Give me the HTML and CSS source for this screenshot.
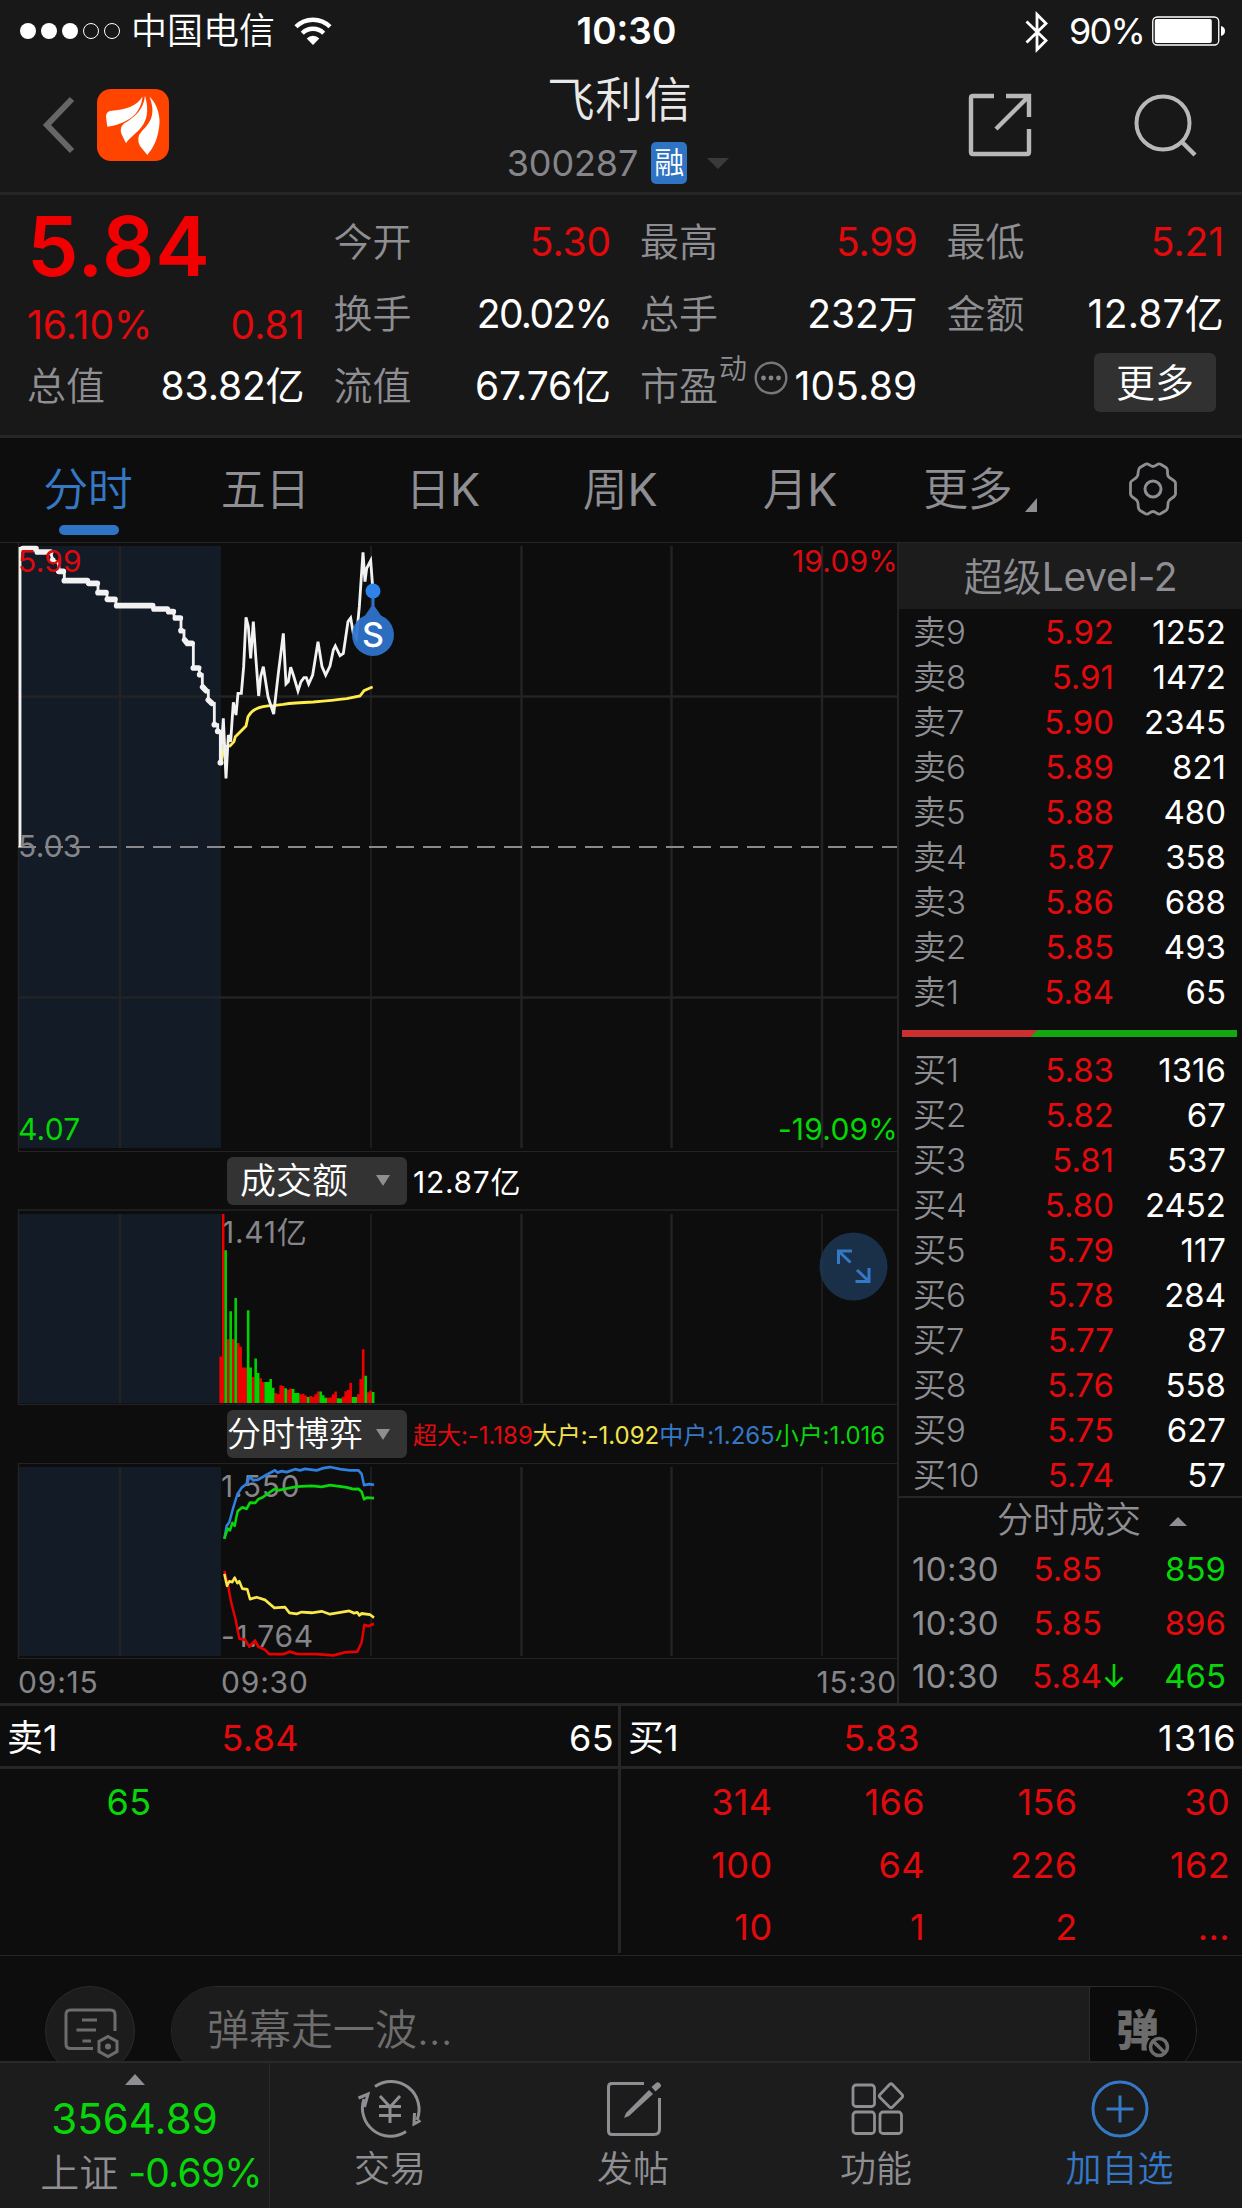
FILE: index.html
```html
<!DOCTYPE html>
<html lang="zh-CN">
<head>
<meta charset="utf-8">
<title>飞利信 300287</title>
<link rel="stylesheet" href="styles.css">
</head>
<body>
<div class="app">

  <header class="top">
    <div class="status">
      <div class="status-left">
        <svg class="signal" width="102" height="18" viewBox="0 0 102 18">
          <g fill="#fff"><circle cx="9" cy="9" r="8"/><circle cx="30" cy="9" r="8"/><circle cx="51" cy="9" r="8"/></g>
          <g fill="none" stroke="#fff" stroke-width="1"><circle cx="72" cy="9" r="7.5"/><circle cx="93" cy="9" r="7.5"/></g>
        </svg>
        <span class="carrier">中国电信</span>
        <svg class="wifi" width="38" height="28" viewBox="0 0 38 28">
          <g fill="none" stroke="#fff" stroke-width="4.4"><path d="M2 9.8A24 24 0 0 1 36 9.8"/><path d="M8.3 16.2A15.2 15.2 0 0 1 29.7 16.2"/></g>
          <path fill="#fff" d="M19 28L12.7 21.4A9 9 0 0 1 25.3 21.4Z"/>
        </svg>
      </div>
      <div class="clock">10:30</div>
      <div class="status-right">
        <svg class="bt" width="24" height="42" viewBox="0 0 24 42"><path d="M1.5 10.5L21 29.5L12 38.5V3.5L21 12.5L1.5 31.5" fill="none" stroke="#fff" stroke-width="2.8"/></svg>
        <span class="batt-text">90%</span>
        <svg width="74" height="30" viewBox="0 0 74 30"><rect x=".75" y="1" width="66" height="28" rx="4.5" fill="none" stroke="#fff" stroke-width="1.3"/><rect x="2.8" y="3" width="57" height="24" rx="2" fill="#fff"/><path d="M69 10Q73 11 73 15T69 20Z" fill="#fff"/></svg>
      </div>
    </div>
    <div class="nav">
      <div class="nav-left">
        <svg class="back" width="34" height="60" viewBox="0 0 34 60"><path d="M30 4L5 30L30 56" fill="none" stroke="#666" stroke-width="6"/></svg>
        <svg class="logo" width="72" height="72" viewBox="0 0 72 72"><rect width="72" height="72" rx="14" fill="#ff4400"/><g fill="#fff"><path d="M45.5 7.5C40 17 30 20.5 13 22Q9 23 9 28L10.3 37.8C28 35 44 27 45.5 7.5Z"/><path d="M48 6.7C46.5 22 36 29 27 34.5Q22 39 24.5 45L29 54.3C36 43 57 38 48 6.7Z"/><path d="M52.5 7.5C61 16 64 29 62 39C60 52 56 59 50.3 66L43 57Q38.5 49 45 42C54 33 59 25 52.5 7.5Z"/></g></svg>
      </div>
      <div class="nav-title">
        <h1>飞利信</h1>
        <div class="code"><span>300287</span><b>融</b><i class="caret"></i></div>
      </div>
      <div class="nav-right">
        <svg width="64" height="64" viewBox="0 0 64 64"><path d="M26 3H5Q3 3 3 5V59Q3 61 5 61H59Q61 61 61 59V36M38 3H61V24M60 4L28 36" fill="none" stroke="#b8b8b8" stroke-width="4.4"/></svg>
        <svg width="64" height="64" viewBox="0 0 64 64"><circle cx="30" cy="30" r="26.5" fill="none" stroke="#b8b8b8" stroke-width="4"/><path d="M48 48L62 62" stroke="#b8b8b8" stroke-width="4.4"/></svg>
      </div>
    </div>
  </header>

  <section class="quote">
    <div class="col first">
      <div class="price">5.84</div>
      <div class="pair chg"><span class="red">16.10%</span><span class="red">0.81</span></div>
      <div class="pair"><label>总值</label><span>83.82亿</span></div>
    </div>
    <div class="col">
      <div class="pair"><label>今开</label><span class="red">5.30</span></div>
      <div class="pair"><label>换手</label><span class="tight">20.02%</span></div>
      <div class="pair"><label>流值</label><span>67.76亿</span></div>
    </div>
    <div class="col">
      <div class="pair"><label>最高</label><span class="red">5.99</span></div>
      <div class="pair"><label>总手</label><span>232万</span></div>
      <div class="pair"><label class="pe">市盈<sup>动</sup><svg width="34" height="34" viewBox="0 0 34 34"><circle cx="17" cy="17" r="15.3" fill="none" stroke="#77777b" stroke-width="2.4"/><g fill="#85858a"><circle cx="9.5" cy="17" r="2.4"/><circle cx="17" cy="17" r="2.4"/><circle cx="24.5" cy="17" r="2.4"/></g></svg></label><span class="loose">105.89</span></div>
    </div>
    <div class="col">
      <div class="pair"><label>最低</label><span class="red">5.21</span></div>
      <div class="pair"><label>金额</label><span class="loose">12.87亿</span></div>
      <div class="pair end"><button class="more">更多</button></div>
    </div>
  </section>

  <nav class="tabs">
    <div class="tab on"><span>分时</span></div>
    <div class="tab"><span>五日</span></div>
    <div class="tab"><span>日<b>K</b></span></div>
    <div class="tab"><span>周<b>K</b></span></div>
    <div class="tab month"><span>月<b>K</b></span></div>
    <div class="tab menu"><span>更多</span><svg class="corner" width="12" height="14" viewBox="0 0 12 14"><path d="M12 0V14H0Z" fill="#8e8e93"/></svg></div>
    <div class="tab"><svg width="50" height="56" viewBox="0 0 50 56"><path d="M17 3.5C20 1 21.5 5.5 25 5.5S30 1 33 3.5L38 6.5C41 8.5 38.5 12 40 15S47.5 19 47.5 22V33C47.5 36.5 42 37 40.5 40.5S41 47.5 38 49.5L33 52.5C30 55 28.5 50.5 25 50.5S20 55 17 52.5L12 49.5C9 47.5 11 44 9.5 40.5S2.5 36.5 2.5 33V22C2.5 19 8 18.5 9.5 15S9 8.5 12 6.5Z" fill="none" stroke="#8e8e93" stroke-width="2.8"/><circle cx="25" cy="28" r="8" fill="none" stroke="#8e8e93" stroke-width="3"/></svg></div>
  </nav>

  <main class="board">
    <div class="charts">
      <svg class="chart" width="897" height="609" viewBox="0 543 897 609">
        <rect x="19" y="546" width="202" height="602" fill="#121b26"/>
        <g stroke="#232325"><path d="M18.5 543V1152M371 546V1148" stroke-width="1.5"/><path d="M120 546V1148M521.5 546V1148M671.5 546V1148M822 546V1148M19 696.5H897M19 997.5H897" stroke-width="2.5"/><path d="M18 1151.5H897" stroke-width="1"/></g>
        <path d="M18 847H897" stroke="#8a8a8e" stroke-width="2" stroke-dasharray="18 9"/>
        <g transform="translate(0 530) scale(.33333)" fill="none" stroke-linejoin="miter">
          <path stroke="#ffee4a" stroke-width="8.5" d="M664 695L672 650L690 648L702 635L706 620L738 588L744 560Q752 545 768 537Q785 528 820 527L850 523Q880 518 940 516Q1000 511 1040 506L1080 498L1092 482L1110 474L1118 471"/>
          <path stroke="#f2f2f2" stroke-width="8.5" d="M60 951V55H108L115 66H152L158 90L175 98L178 124H193V152H262L266 160H294V188H320L322 208H347L349 227H458L460 237H502L506 245L520 246L524 264H543V302H552V330L562 340H580V414H598V434H607V471L618 482H625V510L632 520H643V584H653V604H661V698L670 565L678 745L685 615L692 635L700 517L708 555L714 490H724L731 410L738 262L745 290L752 385L760 275L768 390L776 498L782 440L790 410L804 500L821 552L835 430L850 310L858 462L865 455L872 412L880 435L894 483L903 455L912 443H919L926 462L938 435L954 335L966 410L977 435L990 408L1000 360L1006 348L1020 377L1030 370L1044 275L1052 264L1060 310L1069 325L1078 230L1089 67L1095 155L1100 115L1112 92L1118 170"/>
          <path stroke="#f2f2f2" stroke-width="17" stroke-linecap="round" d="M68 56H108M112 66H152M158 90V91M176 124H190M193 152H262M266 160H292M294 188H318M322 208H345M350 227H458M462 237H502M506 245H520M526 264H541M543 302H544M554 330L562 340H576M580 414H596M599 434H600M608 471L618 482M625 510L636 520M643 584H644M653 604H654M661 698H662"/>
        </g>
        <g class="axis-text"><text x="18" y="572" fill="#dc0a0e">5.99</text><text x="18" y="857" fill="#85858a">5.03</text><text x="18" y="1140" fill="#05d705">4.07</text><text x="898" y="572" text-anchor="end" fill="#dc0a0e">19.09%</text><text x="898" y="1140" text-anchor="end" fill="#05d705">-19.09%</text></g>
        <path d="M373 590V606" stroke="#2f73c4" stroke-width="3"/><circle cx="373" cy="591" r="7.5" fill="#2e82ea"/>
        <path d="M373 604L381 615.5A21 21 0 1 1 365 615.5Z" fill="#2f74cb" fill-opacity=".94"/>
        <text x="373" y="646.5" text-anchor="middle" class="marker">S</text>
      </svg>

      <div class="bar">
        <div class="select wide"><span>成交额</span><i class="caret"></i></div>
        <span class="amount">12.87亿</span>
      </div>

      <svg class="chart" width="897" height="196" viewBox="0 1209 897 196">
        <rect x="19" y="1214" width="202" height="189" fill="#121b26"/>
        <g stroke="#232325"><path d="M18.5 1209V1405M371 1214V1403M822 1214V1403" stroke-width="1.5"/><path d="M120 1214V1403M521.5 1214V1403M671.5 1214V1403" stroke-width="2.5"/><path d="M18 1210H897M18 1404.5H897" stroke-width="1.5"/></g>
        <text x="222" y="1243" fill="#85858a" class="label">1.41亿</text>
        <g transform="translate(0 1130) scale(.33333 .36993)" stroke-width="7.8">
          <path stroke="#ec0000" d="M662 738V612M669.5 738V227M684.5 738V565M699.5 738V565M714.5 738V576M722 738V586M729.5 738V642M737 738V642M759.5 738V668M782 738V671M789.5 738V681M827 738V711M834.5 738V714M842 738V690M849.5 738V692M864.5 738V702M872 738V699M902 738V714M909.5 738V713M917 738V718M932 738V719M939.5 738V722M947 738V714M954.5 738V707M984.5 738V724M992 738V723M999.5 738V714M1007 738V707M1029.5 738V721M1037 738V706M1044.5 738V703M1052 738V683M1074.5 738V714M1082 738V673M1089.5 738V593M1104.5 738V709M1112 738V705"/>
          <path stroke="#00d200" d="M677 738V325M692 738V490M707 738V454M744.5 738V487M752 738V642M767 738V618M774.5 738V657M797 738V681M804.5 738V681M812 738V673M819.5 738V697M857 738V698M879.5 738V700M887 738V711M894.5 738V711M924.5 738V722M962 738V707M969.5 738V717M977 738V724M1014.5 738V725M1022 738V726M1059.5 738V722M1067 738V722M1097 738V664M1119.5 738V708"/>
        </g>
        <circle cx="853.5" cy="1266.5" r="34" fill="#1d3958" fill-opacity=".8"/>
        <path d="M838.5 1264V1251H852M839 1251.5L850.5 1262.5M869 1268V1281.5H855.5M868.5 1281L857 1270" fill="none" stroke="#3478c6" stroke-width="3"/>
      </svg>

      <div class="bar">
        <div class="select"><span>分时博弈</span><i class="caret"></i></div>
        <div class="legend"><span class="red">超大:-1.189</span><span class="yellow">大户:-1.092</span><span class="blue">中户:1.265</span><span class="green">小户:1.016</span></div>
      </div>

      <svg class="chart" width="897" height="196" viewBox="0 1463 897 196">
        <rect x="19" y="1467" width="202" height="189" fill="#121b26"/>
        <g stroke="#232325"><path d="M18.5 1463V1659M371 1467V1656M822 1467V1656" stroke-width="1.5"/><path d="M120 1467V1656M521.5 1467V1656M671.5 1467V1656" stroke-width="2.5"/><path d="M18 1463.5H897M18 1658.5H897" stroke-width="1"/></g>
        <g class="label" fill="#85858a"><text x="221" y="1496.5">1.550</text><text x="221" y="1646.5">-1.764</text></g>
        <g transform="translate(0 1130) scale(.33333 .36993)" fill="none" stroke-width="7.5" stroke-linejoin="round">
          <path stroke="#2f80e0" d="M673 1105L680 1070L688 1060L700 1020L712 985L725 967L742 955L748 937L760 947L775 945L800 932L825 920L832 926L845 922L860 925L885 917L900 920L915 916L950 920L970 914L990 911L1020 917L1050 920H1075L1085 930L1092 960L1108 957L1122 959"/>
          <path stroke="#0bd60b" d="M673 1105L683 1078L690 1082L697 1062L704 1070L713 1030L727 1020L740 1024L750 1007L766 1008L775 998L790 992L808 980L825 970L835 974L855 970L890 964L935 962L965 965L990 960L1040 966L1060 971L1075 970L1085 978L1092 998L1100 994L1122 995"/>
          <path stroke="#e60000" d="M673 1192L685 1235L693 1275L706 1320L718 1375L735 1378L748 1397L765 1380L775 1397L795 1405L808 1417H850L870 1410L890 1416L950 1417L1000 1420L1035 1412L1072 1410L1085 1385L1093 1338L1105 1341L1122 1335"/>
          <path stroke="#fbe94b" d="M673 1200L681 1232L688 1220L697 1222L704 1210L712 1225L718 1220L727 1240L742 1242L750 1268L770 1263L795 1270L823 1292L855 1290L868 1305L890 1308L905 1303L935 1305L965 1301L990 1309L1048 1300L1062 1306L1072 1304L1078 1312L1085 1307L1110 1310L1122 1318"/>
        </g>
      </svg>
      <div class="times"><span>09:15</span><span>09:30</span><span>15:30</span></div>
    </div>

    <aside class="book">
      <div class="book-head">超级<b>Level-2</b></div>
      <div class="levels asks">
        <div class="lv"><label>卖9</label><b>5.92</b><span>1252</span></div>
        <div class="lv"><label>卖8</label><b>5.91</b><span>1472</span></div>
        <div class="lv"><label>卖7</label><b>5.90</b><span>2345</span></div>
        <div class="lv"><label>卖6</label><b>5.89</b><span>821</span></div>
        <div class="lv"><label>卖5</label><b>5.88</b><span>480</span></div>
        <div class="lv"><label>卖4</label><b>5.87</b><span>358</span></div>
        <div class="lv"><label>卖3</label><b>5.86</b><span>688</span></div>
        <div class="lv"><label>卖2</label><b>5.85</b><span>493</span></div>
        <div class="lv"><label>卖1</label><b>5.84</b><span>65</span></div>
      </div>
      <div class="ratio"></div>
      <div class="levels bids">
        <div class="lv"><label>买1</label><b>5.83</b><span>1316</span></div>
        <div class="lv"><label>买2</label><b>5.82</b><span>67</span></div>
        <div class="lv"><label>买3</label><b>5.81</b><span>537</span></div>
        <div class="lv"><label>买4</label><b>5.80</b><span>2452</span></div>
        <div class="lv"><label>买5</label><b>5.79</b><span>117</span></div>
        <div class="lv"><label>买6</label><b>5.78</b><span>284</span></div>
        <div class="lv"><label>买7</label><b>5.77</b><span>87</span></div>
        <div class="lv"><label>买8</label><b>5.76</b><span>558</span></div>
        <div class="lv"><label>买9</label><b>5.75</b><span>627</span></div>
        <div class="lv"><label>买10</label><b>5.74</b><span>57</span></div>
      </div>
      <div class="ticks">
        <div class="ticks-head"><span>分时成交</span><i class="caret up"></i></div>
        <div class="tick"><label>10:30</label><b>5.85</b><i></i><span class="green">859</span></div>
        <div class="tick"><label>10:30</label><b>5.85</b><i></i><span class="red">896</span></div>
        <div class="tick"><label>10:30</label><b>5.84</b><i><svg width="20" height="26" viewBox="0 0 20 26"><path d="M10 1V23M1.5 14.5L10 23L18.5 14.5" fill="none" stroke="#05d705" stroke-width="2.6"/></svg></i><span class="green">465</span></div>
      </div>
    </aside>
  </main>

  <section class="queue">
    <div class="side">
      <div class="side-head"><label>卖1</label><b>5.84</b><span>65</span></div>
      <div class="cells green"><span>65</span></div>
    </div>
    <div class="side">
      <div class="side-head"><label>买1</label><b>5.83</b><span class="far">1316</span></div>
      <div class="cells red">
        <span>314</span><span>166</span><span>156</span><span>30</span>
        <span>100</span><span>64</span><span>226</span><span>162</span>
        <span>10</span><span>1</span><span>2</span><span>...</span>
      </div>
    </div>
  </section>

  <section class="danmaku">
    <div class="round"><svg width="58" height="54" viewBox="0 0 58 54"><g fill="none" stroke="#6c6c6c" stroke-width="3"><path d="M32 40.5H9.500Q5 40.500 5 36V6.500Q5 2 9.500 2H49.500Q54 2 54 6.500V23"/><path d="M21 12H36M15.500 22H35M21.500 33H30"/><path d="M47 28.500L56 33.500V43.500L47 48.500L38 43.500V33.500Z"/></g><circle cx="47" cy="38.500" r="3" fill="#6c6c6c"/></svg></div>
    <div class="pill"><div class="input">弹幕走一波...</div><div class="toggle"><span>弹</span><svg class="ban" width="26" height="26" viewBox="0 0 26 26"><circle cx="13" cy="13" r="12.5" fill="#0b0b0b"/><circle cx="13" cy="13" r="8.5" fill="none" stroke="#6c6c6c" stroke-width="3.6"/><path d="M7 7L19 19" stroke="#6c6c6c" stroke-width="3.6"/></svg></div></div>
  </section>

  <footer class="dock">
    <div class="index"><i class="caret up"></i><div class="idx-val">3564.89</div><div class="idx-row"><label>上证</label><span>-0.69%</span></div></div>
    <div class="item"><svg width="68" height="72" viewBox="0 0 68 72"><g fill="none" stroke="#8e8e93" stroke-width="3"><path d="M19 13.5A28 28 0 0 1 61 47M64.5 47.5L58 51L58.5 40"/><path d="M50 58.5A28 28 0 0 1 8 26M2.5 25L12 21L8.5 34"/><path d="M24 23L34 34L44 23M34 34V50M23 33.5H45M23 42.5H45"/></g></svg><span>交易</span></div>
    <div class="item"><svg width="60" height="72" viewBox="-1 0 60 72"><path d="M40 10.5H8Q4.5 10.5 4.5 14V58Q4.5 61.5 8 61.5H50Q55.5 61.5 55.5 56V25" fill="none" stroke="#8e8e93" stroke-width="3"/><path d="M45 17L49 21L25 43L20 45L22 40ZM47.5 14L52 10Q54 8.5 56 10.5T56 14.5L51.5 18.5Z" fill="#8e8e93"/></svg><span>发帖</span></div>
    <div class="item"><svg width="60" height="72" viewBox="-1.5 0 60 72"><g fill="none" stroke="#8e8e93" stroke-width="2.8"><rect x="5.5" y="12" width="21.5" height="21.5" rx="3"/><rect x="5.5" y="39" width="21.5" height="21.5" rx="3"/><rect x="32.5" y="39" width="21.5" height="21.5" rx="3"/><path d="M42 11.5Q43.5 10 45 11.5L54.5 21.5Q56 23 54.5 24.5L45 34Q43.5 35.5 42 34L32.5 24.5Q31 23 32.5 21.5Z"/></g></svg><span>功能</span></div>
    <div class="item on"><svg width="60" height="72" viewBox="0 0 60 72"><g fill="none" stroke="#3478c6" stroke-width="3"><circle cx="30" cy="36" r="27"/><path d="M30 22.5V49.5M16.5 36H43.5"/></g></svg><span>加自选</span></div>
  </footer>
</div>
</body>
</html>
```
FILE: styles.css
```css
* { box-sizing: border-box; }
body { margin: 0; background: #0d0d0d; color: #fff; font-family: Inter, "Noto Sans CJK SC", sans-serif; -webkit-font-smoothing: antialiased; }
h1, b, i, label, button { font: inherit; margin: 0; padding: 0; border: 0; font-style: normal; }
svg { display: block; flex: none; }
.app { width: 1242px; height: 2208px; overflow: hidden; display: flex; flex-direction: column; font-weight: 400; }
.red { color: #e20a0d; }
.green { color: #08d60a; }
.yellow { color: #f2e24c; }
.blue { color: #3478c6; }
.caret { display: block; width: 0; height: 0; border: 7px solid transparent; border-top: 11px solid #8e8e93; border-bottom: 0; }
.caret.up { border: 10px solid transparent; border-bottom: 11px solid #8e8e93; border-top: 0; }

/* status bar and title */
.top { height: 195px; background: #181818; border-bottom: 3px solid #262626; flex: none; }
.status { height: 60px; display: grid; grid-template-columns: 1fr 100px 1fr; align-items: center; font-size: 36px; line-height: 62px; padding: 0 16px 0 19px; }
.status-left, .status-right { display: flex; align-items: center; }
.status-right { justify-content: flex-end; }
.carrier { margin-left: 10px; font-weight: 350; }
.wifi { margin-left: 19px; }
.clock { font-size: 37px; font-weight: 600; text-align: center; white-space: nowrap; padding-left: 4px; }
.bt { margin: 2px 20px 0 0; }
.batt-text { margin-right: 8px; letter-spacing: -1.8px; }
.nav { height: 132px; display: grid; grid-template-columns: 1fr 300px 1fr; }
.nav-left { display: flex; align-items: center; padding-left: 42px; height: 130px; }
.logo { margin-left: 21px; }
.nav-title { display: flex; flex-direction: column; align-items: center; padding-top: 10px; margin-left: -3px; }
.nav-title h1 { font-size: 48px; line-height: 60px; color: #e8e8e8; font-weight: 350; letter-spacing: .5px; }
.code { display: flex; align-items: center; height: 64px; margin-top: 1px; margin-left: -3px; color: #85858a; font-size: 36px; letter-spacing: -.1px; }
.code b { width: 36px; height: 42px; margin-left: 13px; border-radius: 5px; background: #2f73c4; color: #fff; font-size: 30px; font-weight: 350; line-height: 41px; text-align: center; letter-spacing: 0; }
.code .caret { margin-left: 20px; border-width: 11px 11px 0; border-top-color: #3a3a3a; }
.nav-right { display: flex; justify-content: flex-end; gap: 101px; padding: 33px 45px 0 0; }

/* quote summary */
.quote { height: 243px; flex: none; background: #181818; border-bottom: 3px solid #262626; padding: 11px 18px 0 27px; display: grid; grid-template-columns: repeat(4, 277.5px); column-gap: 29px; font-size: 39px; line-height: 72px; }
.pair { height: 72px; display: flex; justify-content: space-between; letter-spacing: -.1px; }
.pair label, .lv label { color: #8e8e93; font-weight: 350; letter-spacing: 0; }
.tick label { color: #8e8e93; letter-spacing: .4px; }
.tight { letter-spacing: -1.7px; }
.loose { letter-spacing: .2px; }
.price { height: 82px; font-size: 82px; line-height: 82px; font-weight: 600; color: #f00000; letter-spacing: .7px; }
.first .chg { height: 62px; line-height: 74px; letter-spacing: 0; }
.pe { display: flex; white-space: nowrap; }
.pe sup { font-size: 28px; line-height: 38px; margin-left: 1px; }
.pe svg { margin: 11px 0 0 7px; }
.end { justify-content: flex-end; }
.more { width: 122px; height: 59px; margin: 3px 8px 0 0; border-radius: 6px; background: #313131; color: #fff; font-size: 39px; font-weight: 350; line-height: 57px; letter-spacing: 0; }

/* period tabs */
.tabs { height: 105px; flex: none; border-bottom: 1px solid #262626; display: grid; grid-template-columns: repeat(7, 1fr); color: #8e8e93; font-size: 45px; font-weight: 350; }
.tab { display: flex; align-items: center; justify-content: center; position: relative; padding-bottom: 2px; }
.tab span { line-height: 60px; margin: 1px 2px 0 0; letter-spacing: -.5px; }
.tab b { font-weight: 400; }
.tab.on { color: #3478c6; }
.tab.on::after { content: ""; position: absolute; left: 59px; bottom: 7px; width: 60px; height: 10px; border-radius: 5px; background: #2f73c4; }
.month { padding-left: 5px; }
.menu { padding-left: 9px; }
.corner { margin: 32px 0 0 11px; }

/* charts */
.board { height: 1163px; flex: none; display: grid; grid-template-columns: 897px 345px; border-bottom: 3px solid #262626; }
.charts { display: flex; flex-direction: column; }
.axis-text { font-size: 30px; letter-spacing: .2px; }
.label { font-size: 30px; letter-spacing: .7px; }
.marker { font-size: 34px; font-weight: 500; fill: #fff; }
.bar { height: 57px; flex: none; display: flex; align-items: center; padding-left: 227px; }
.bar + .chart + .bar { height: 58px; }
.select { width: 180px; height: 48px; border-radius: 6px; background: #333; display: flex; align-items: center; justify-content: space-between; padding: 0 17px 0 0; font-size: 34px; font-weight: 350; line-height: 46px; }
.select.wide { font-size: 36px; padding-left: 13px; }
.amount { margin: -2px 0 0 6px; font-size: 30px; letter-spacing: .7px; }
.legend { margin: -1px 0 0 6px; font-size: 24px; letter-spacing: -.03px; display: flex; }
.times { height: 44px; display: grid; grid-template-columns: 203px 1fr auto; padding: 0 0 0 18px; font-size: 30px; line-height: 47px; letter-spacing: .8px; color: #85858a; }

/* order book */
.book { border-left: 2px solid #232325; display: flex; flex-direction: column; font-size: 33px; }
.book-head { height: 66px; background: #1c1c1c; color: #8e8e93; font-size: 39px; line-height: 67px; text-align: center; font-weight: 350; }
.book-head b { font-weight: 400; letter-spacing: -.3px; }
.lv { height: 45px; line-height: 45px; display: grid; grid-template-columns: 100px 101px 1fr; padding: 0 16px 0 14px; }
.lv b { color: #e20a0d; text-align: right; }
.lv span, .tick span { text-align: right; }
.asks { padding-top: 1px; }
.ratio { height: 7px; margin: 15px 5px 11px 3px; background: linear-gradient(135deg, #cc2f30 0 95.5px, transparent 95.5px), #13a813; }
.bids { height: 448px; }
.ticks { border-top: 2px solid #262626; flex: 1; }
.ticks-head { height: 44px; display: flex; align-items: center; color: #8e8e93; font-size: 36px; font-weight: 350; padding-left: 98px; line-height: 44px; }
.ticks-head span { margin-top: -1px; }
.ticks-head .caret { margin: 3px 0 0 28px; border-width: 0 9px 9px; }
.tick { height: 53.7px; line-height: 54px; display: grid; grid-template-columns: 105px 87px 22px 1fr; align-items: center; padding: 0 16px 0 13px; }
.tick b { color: #e20a0d; text-align: right; padding-right: 2px; }

/* queue */
.queue { height: 250px; flex: none; display: grid; grid-template-columns: 621px 621px; border-bottom: 1px solid #262626; font-size: 36px; letter-spacing: .4px; }
.side:first-child { border-right: 3px solid #262626; height: 247px; }
.side-head { height: 63px; border-bottom: 3px solid #262626; line-height: 65px; display: grid; grid-template-columns: 170px 127px 1fr; padding: 0 4px 0 7px; }
.side-head b { color: #e20a0d; text-align: right; padding-right: 5px; }
.side-head span { text-align: right; }
.side-head .far { letter-spacing: 1.3px; padding-right: 1px; }
.side-head label { letter-spacing: 0; }
.cells { display: grid; grid-template-columns: 151.5px repeat(3, 152.5px); grid-auto-rows: 62.5px; line-height: 64px; text-align: right; padding-top: 1px; }

/* comment bar */
.danmaku { height: 105px; flex: none; padding: 30px 45px 0 45px; display: flex; overflow: hidden; }
.round { width: 90px; height: 90px; flex: none; border-radius: 50%; background: #1c1c1c; border: 1px solid #2b2b2b; display: flex; justify-content: center; padding-top: 21px; }
.pill { margin-left: 36px; flex: 1; height: 90px; border-radius: 45px; border: 1px solid #2b2b2b; display: flex; overflow: hidden; }
.input { flex: 1; background: #1c1c1c; color: #6e6e6e; font-size: 42px; font-weight: 350; line-height: 86px; padding-left: 35px; }
.toggle { width: 107px; border-left: 1px solid #2b2b2b; background: #0b0b0b; color: #6c6c6c; position: relative; }
.toggle span { display: block; font-size: 43px; line-height: 86px; font-weight: 900; padding-left: 26px; }
.ban { position: absolute; left: 56px; top: 47px; }

/* bottom bar */
.dock { height: 147px; flex: none; background: #1c1c1c; border-top: 2px solid #292929; display: grid; grid-template-columns: 270px repeat(4, 243px); }
.index { border-right: 1px solid #292929; padding-top: 11px; display: flex; flex-direction: column; align-items: center; color: #08d60a; }
.idx-val { font-size: 42px; line-height: 50px; margin-top: 9px; }
.idx-row { display: flex; gap: 10px; font-size: 39px; line-height: 58px; margin: 0 -33px 0 0; letter-spacing: -.8px; }
.idx-row label { color: #8e8e93; font-weight: 350; letter-spacing: 0; }
.item { display: flex; flex-direction: column; align-items: center; padding: 10px 3px 0 0; color: #8e8e93; font-size: 36px; line-height: 49px; font-weight: 350; }
.item.on { color: #3478c6; padding-right: 2px; }
```
